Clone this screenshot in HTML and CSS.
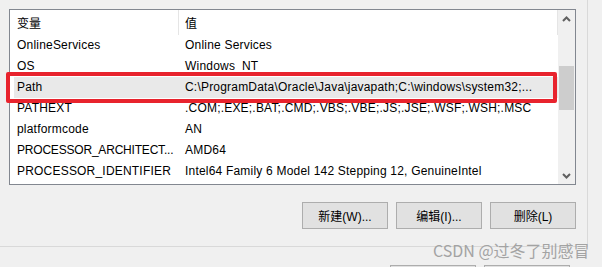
FILE: index.html
```html
<!DOCTYPE html>
<html lang="zh-CN">
<head>
<meta charset="UTF-8">
<title>环境变量</title>
<link rel="stylesheet" href="styles.css">
</head>
<body>
<div class="upper">
    <div class="listbox">
        <div class="list-main">
            <div class="row head">
                <div class="cell name">变量</div>
                <div class="cell value">值</div>
            </div>
            <div class="row"><div class="cell name">OnlineServices</div><div class="cell value">Online Services</div></div>
            <div class="row"><div class="cell name">OS</div><div class="cell value">Windows_NT</div></div>
            <div class="row selected"><div class="cell name">Path</div><div class="cell value">C:\ProgramData\Oracle\Java\javapath;C:\windows\system32;...</div></div>
            <div class="row"><div class="cell name">PATHEXT</div><div class="cell value">.COM;.EXE;.BAT;.CMD;.VBS;.VBE;.JS;.JSE;.WSF;.WSH;.MSC</div></div>
            <div class="row"><div class="cell name">platformcode</div><div class="cell value">AN</div></div>
            <div class="row"><div class="cell name fit">PROCESSOR_ARCHITECT...</div><div class="cell value">AMD64</div></div>
            <div class="row"><div class="cell name">PROCESSOR_IDENTIFIER</div><div class="cell value">Intel64 Family 6 Model 142 Stepping 12, GenuineIntel</div></div>
        </div>
        <div class="scrollbar">
            <div class="arrow">
                <svg width="9" height="6" viewBox="0 0 9 6"><polyline points="1,5 4.5,1.5 8,5" fill="none" stroke="#606060" stroke-width="2"/></svg>
            </div>
            <div class="track"><div class="thumb"></div></div>
            <div class="arrow">
                <svg width="9" height="6" viewBox="0 0 9 6"><polyline points="1,1 4.5,4.5 8,1" fill="none" stroke="#606060" stroke-width="2"/></svg>
            </div>
        </div>
    </div>
    <div class="actions">
        <button class="btn">新建(W)...</button>
        <button class="btn">编辑(I)...</button>
        <button class="btn">删除(L)</button>
    </div>
</div>
<div class="lower">
    <button class="btn"></button>
    <button class="btn"></button>
</div>
<div class="mark"></div>
<div class="watermark">CSDN @过冬了别感冒</div>
</body>
</html>
```

FILE: styles.css
```css
body {
    margin: 0;
    width: 602px;
    height: 267px;
    overflow: hidden;
    position: relative;
    background-color: #f0f0f0;
    font-family: "Liberation Sans", "Noto Sans CJK SC", sans-serif;
    font-size: 12px;
    color: #000;
}
.upper {
    box-sizing: border-box;
    width: 588px;
    height: 247px;
    padding: 9px 0 0 9px;
    border-right: 1px solid #d9d9d9;
    border-bottom: 1px solid #d9d9d9;
}
.listbox {
    box-sizing: border-box;
    width: 567px;
    height: 176px;
    border: 1px solid #828790;
    background-color: #fff;
    display: flex;
}
.list-main {
    flex: 1;
    overflow: hidden;
}
.row {
    display: flex;
    height: 21px;
    line-height: 21px;
    letter-spacing: 0.2px;
}
.row.head {
    height: 25px;
    line-height: 25px;
    font-family: "Noto Sans CJK SC", sans-serif;
    letter-spacing: 0;
}
.cell {
    white-space: nowrap;
    overflow: hidden;
    text-overflow: ellipsis;
}
.name {
    box-sizing: border-box;
    width: 169px;
    padding: 0 0 0 7px;
}
.name.fit {
    letter-spacing: -0.2px;
}
.value {
    flex: 1;
    padding: 0 6px 0 6px;
}
.head .name {
    border-right: 1px solid #e5e5e5;
}
.head .value {
    border-right: 1px solid #e5e5e5;
}
.row.selected {
    background: linear-gradient(to right, #fff 4px, #e9e9e9 4px);
}
.scrollbar {
    width: 17px;
    display: flex;
    flex-direction: column;
    background-color: #f0f0f0;
}
.arrow {
    height: 17px;
    display: flex;
    align-items: center;
    justify-content: center;
}
.track {
    flex: 1;
    padding: 39px 1px 0 1px;
}
.thumb {
    height: 44px;
    background-color: #cdcdcd;
}
.actions {
    width: 567px;
    margin-top: 17px;
    display: flex;
    justify-content: flex-end;
    gap: 8px;
}
.btn {
    box-sizing: border-box;
    width: 86px;
    height: 27px;
    padding: 0;
    border: 1px solid #adadad;
    background-color: #e1e1e1;
    font-family: "Liberation Sans", "Noto Sans CJK SC", sans-serif;
    font-size: 12px;
    color: #000;
}
.lower {
    height: 20px;
    overflow: hidden;
    display: flex;
    gap: 8px;
    padding: 18px 0 0 390px;
    box-sizing: border-box;
}
.mark {
    position: absolute;
    left: 6px;
    top: 72px;
    width: 551px;
    height: 31px;
    box-sizing: border-box;
    border: 4px solid #e8232d;
    border-radius: 2px;
}
.watermark {
    position: absolute;
    left: 433px;
    top: 240px;
    font-family: "Noto Sans CJK SC", sans-serif;
    font-size: 16px;
    line-height: 20px;
    color: #a3a3a3;
    white-space: nowrap;
}
```
